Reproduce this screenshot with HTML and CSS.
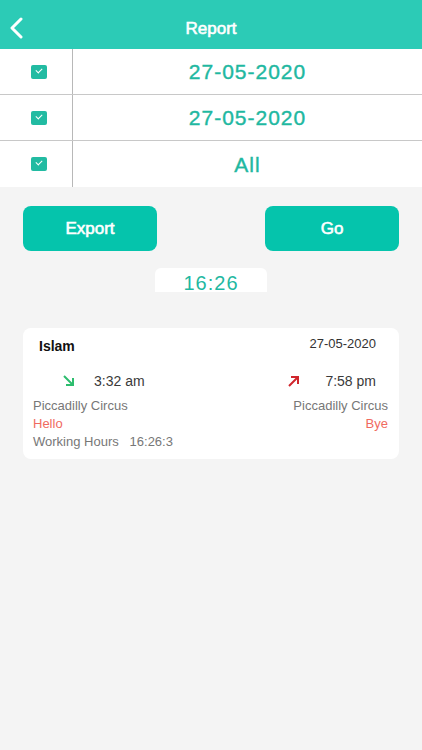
FILE: index.html
```html
<!DOCTYPE html>
<html lang="en">
<head>
    <meta charset="UTF-8">
    <meta name="viewport" content="width=device-width, initial-scale=1.0">
    <title>Report</title>
    <link rel="stylesheet" href="styles.css">
</head>
<body>

    <header class="topbar">
        <svg class="back" width="14" height="22" viewBox="0 0 14 22">
            <path d="M12 2 L3 11 L12 20" fill="none" stroke="#fff" stroke-width="3" stroke-linecap="round" stroke-linejoin="round"/>
        </svg>
        <h1>Report</h1>
    </header>

    <div class="filters">
        <div class="filter-row">
            <div class="check-cell"><span class="check"></span></div>
            <div class="value">27-05-2020</div>
        </div>
        <div class="filter-row">
            <div class="check-cell"><span class="check"></span></div>
            <div class="value">27-05-2020</div>
        </div>
        <div class="filter-row">
            <div class="check-cell"><span class="check"></span></div>
            <div class="value">All</div>
        </div>
    </div>

    <div class="actions">
        <button>Export</button>
        <button>Go</button>
    </div>

    <div class="total"><span>16:26</span></div>

    <div class="card">
        <div class="card-head">
            <span class="name">Islam</span>
            <span class="date">27-05-2020</span>
        </div>
        <div class="times">
            <div class="time">
                <svg width="14" height="14" viewBox="0 0 14 14">
                    <path d="M2 2 L11 11 M4 11 L11 11 L11 4" fill="none" stroke="#2dbd6e" stroke-width="2"/>
                </svg>
                <span>3:32 am</span>
            </div>
            <div class="time out">
                <svg width="14" height="14" viewBox="0 0 14 14">
                    <path d="M2 12 L11 3 M4 3 L11 3 L11 10" fill="none" stroke="#d0262c" stroke-width="2"/>
                </svg>
                <span>7:58 pm</span>
            </div>
        </div>
        <div class="places">
            <div>
                <p class="place">Piccadilly Circus</p>
                <p class="note">Hello</p>
            </div>
            <div class="right">
                <p class="place">Piccadilly Circus</p>
                <p class="note">Bye</p>
            </div>
        </div>
        <p class="hours">Working Hours&nbsp;&nbsp;&nbsp;16:26:3</p>
    </div>

</body>
</html>
```

FILE: styles.css
```css
body {
    font-family: "Liberation Sans", Arial, sans-serif;
    margin: 0;
    background-color: #f4f4f4;
    min-height: 750px;
}
.topbar {
    height: 49px;
    background-color: #2ccbb6;
    display: flex;
    align-items: center;
    justify-content: center;
    position: relative;
}
.topbar h1 {
    margin: 0;
    padding-top: 8px;
    color: #fff;
    font-size: 17px;
    font-weight: normal;
    -webkit-text-stroke: 0.6px #fff;
}
.back {
    position: absolute;
    left: 9px;
    top: 17px;
}
.filters {
    background-color: #fff;
}
.filter-row {
    display: flex;
    height: 46px;
    box-sizing: border-box;
    border-bottom: 1px solid #c8c8c8;
}
.filter-row:last-child {
    border-bottom: none;
}
.check-cell {
    width: 73px;
    border-right: 1px solid #b8b8b8;
    display: flex;
    align-items: center;
    justify-content: center;
    padding-left: 6px;
    box-sizing: border-box;
}
.check {
    width: 16px;
    height: 14px;
    border-radius: 2px;
    background-color: #22bba2;
    position: relative;
}
.check::after {
    content: "";
    position: absolute;
    left: 5px;
    top: 3px;
    width: 5px;
    height: 3px;
    border-left: 1.5px solid #fff;
    border-bottom: 1.5px solid #fff;
    transform: rotate(-45deg);
}
.value {
    flex: 1;
    display: flex;
    align-items: center;
    justify-content: center;
    color: #1fb8a1;
    font-size: 21px;
    letter-spacing: 1px;
    padding-top: 1px;
    -webkit-text-stroke: 0.4px #1fb8a1;
}
.actions {
    display: flex;
    justify-content: space-between;
    padding: 19px 23px 0;
}
.actions button {
    width: 134px;
    height: 45px;
    border: none;
    border-radius: 8px;
    background-color: #05c4ac;
    color: #fff;
    font-family: inherit;
    font-size: 17px;
    font-weight: normal;
    -webkit-text-stroke: 0.6px #fff;
}
.total {
    width: 112px;
    height: 24px;
    margin: 17px auto 0;
    padding-top: 6px;
    box-sizing: border-box;
    background-color: #fff;
    border-radius: 6px 6px 0 0;
    text-align: center;
}
.total span {
    display: block;
    color: #1fb8a1;
    font-size: 20px;
    line-height: 18px;
    letter-spacing: 1px;
}
.card {
    margin: 36px 23px 0;
    background-color: #fff;
    border-radius: 8px;
    padding: 8px 11px 8px 10px;
}
.card p {
    margin: 0;
}
.card-head {
    display: flex;
    justify-content: space-between;
    padding: 0 12px 0 6px;
}
.name {
    font-size: 14px;
    font-weight: bold;
    color: #111;
    padding-top: 2px;
}
.date {
    font-size: 13px;
    color: #333;
}
.times {
    display: flex;
    justify-content: space-between;
    padding: 19px 12px 0 29px;
}
.time {
    display: flex;
    align-items: center;
    gap: 18px;
    font-size: 14px;
    color: #3a3a3a;
}
.time.out {
    gap: 24px;
}
.places {
    display: flex;
    justify-content: space-between;
    margin-top: 8px;
}
.right {
    text-align: right;
}
.place {
    font-size: 13px;
    color: #777;
    line-height: 18px;
}
.note {
    font-size: 13px;
    color: #f06a5f;
    line-height: 18px;
}
.hours {
    font-size: 13px;
    color: #777;
    line-height: 18px;
}
```
